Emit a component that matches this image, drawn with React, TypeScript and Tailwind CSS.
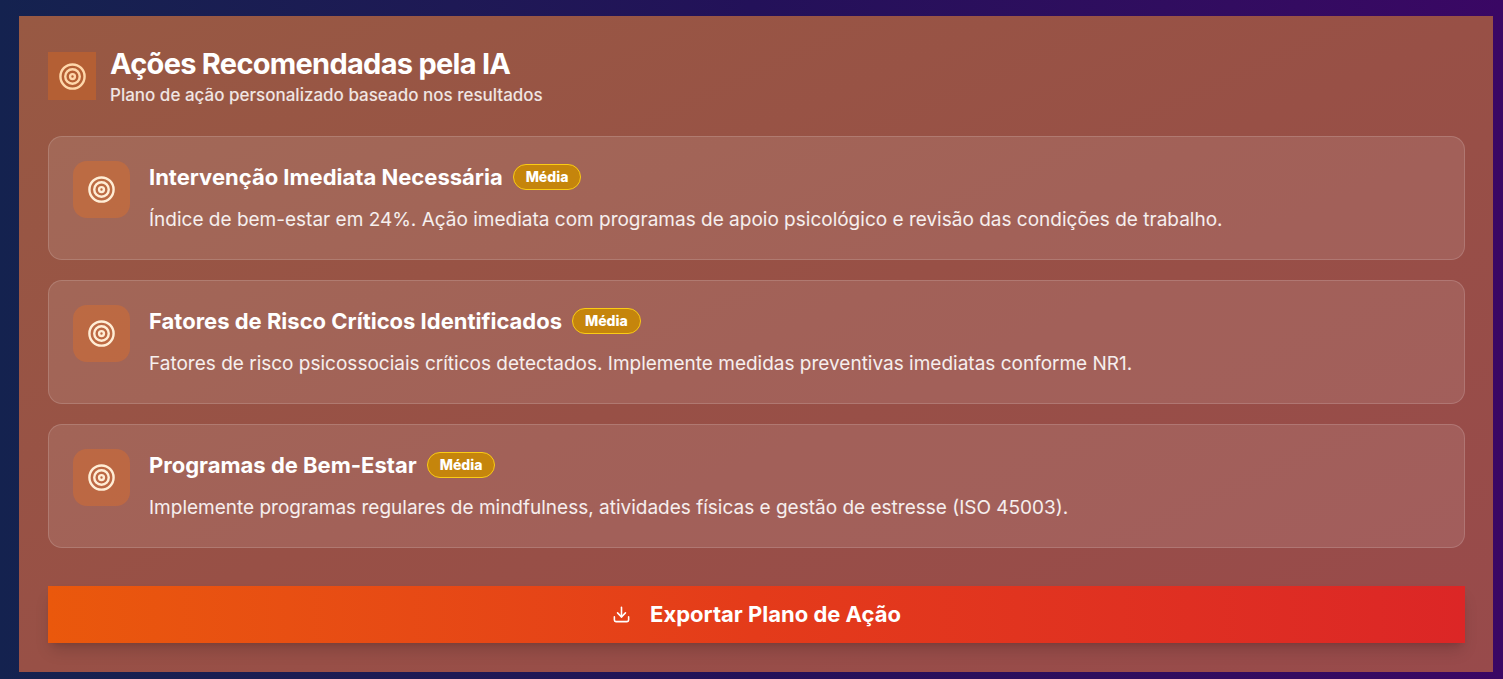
import { Download, Target } from "lucide-react";

type Action = { title: string; priority: string; description: string };

const actions: Action[] = [
  {
    title: "Intervenção Imediata Necessária",
    priority: "Média",
    description:
      "Índice de bem-estar em 24%. Ação imediata com programas de apoio psicológico e revisão das condições de trabalho.",
  },
  {
    title: "Fatores de Risco Críticos Identificados",
    priority: "Média",
    description:
      "Fatores de risco psicossociais críticos detectados. Implemente medidas preventivas imediatas conforme NR1.",
  },
  {
    title: "Programas de Bem-Estar",
    priority: "Média",
    description:
      "Implemente programas regulares de mindfulness, atividades físicas e gestão de estresse (ISO 45003).",
  },
];

function ActionCard({ title, priority, description }: Action) {
  return (
    <li className="flex items-start gap-[19px] rounded-[14px] border border-white/15 bg-white/10 p-6">
      <div className="flex size-[57px] shrink-0 items-center justify-center rounded-[14px] bg-[#f97316]/30">
        <Target className="size-[29px] text-[#ffedd5]" aria-hidden="true" />
      </div>
      <div className="min-w-0 flex-1">
        <div className="flex items-center gap-[10px]">
          <h3 className="text-[22px] leading-8 font-bold text-white">{title}</h3>
          <span className="rounded-full border border-[#facc15] bg-[#c5850c] px-3 text-[14px] leading-6 font-extrabold text-white">
            {priority}
          </span>
        </div>
        <p className="mt-[11px] text-[19px] leading-[31px] text-white/90">{description}</p>
      </div>
    </li>
  );
}

export default function App() {
  return (
    <main className="min-h-screen bg-linear-to-r from-[#14224f] via-[#231159] to-[#3a0764] pt-4 pr-[10px] pb-[7px] pl-[19px] font-['Inter',sans-serif]">
      <section className="bg-linear-to-br from-[#985943] via-[#985046] to-[#984a4b] pt-9 pr-7 pb-[29px] pl-[29px]">
        <header className="flex items-start gap-[14px]">
          <div className="flex size-12 shrink-0 items-center justify-center bg-[#b45f34]">
            <Target className="size-[29px] text-[#fed7aa]" aria-hidden="true" />
          </div>
          <div>
            <h2 className="text-[29px] leading-6 font-bold tracking-tight text-white">
              Ações Recomendadas pela IA
            </h2>
            <p className="mt-[7px] text-[17px] leading-6 font-medium text-white/85">
              Plano de ação personalizado baseado nos resultados
            </p>
          </div>
        </header>
        <ul className="mt-[29px] flex flex-col gap-5">
          {actions.map((action) => (
            <ActionCard key={action.title} {...action} />
          ))}
        </ul>
        <button
          type="button"
          className="mt-[38px] flex w-full items-center justify-center gap-[19px] bg-linear-to-r from-[#ea580c] via-[#e43b1a] to-[#dc2626] py-3 text-[22px] leading-[33px] font-bold text-white shadow-lg shadow-black/15"
        >
          <Download className="size-[19px]" aria-hidden="true" />
          Exportar Plano de Ação
        </button>
      </section>
    </main>
  );
}
